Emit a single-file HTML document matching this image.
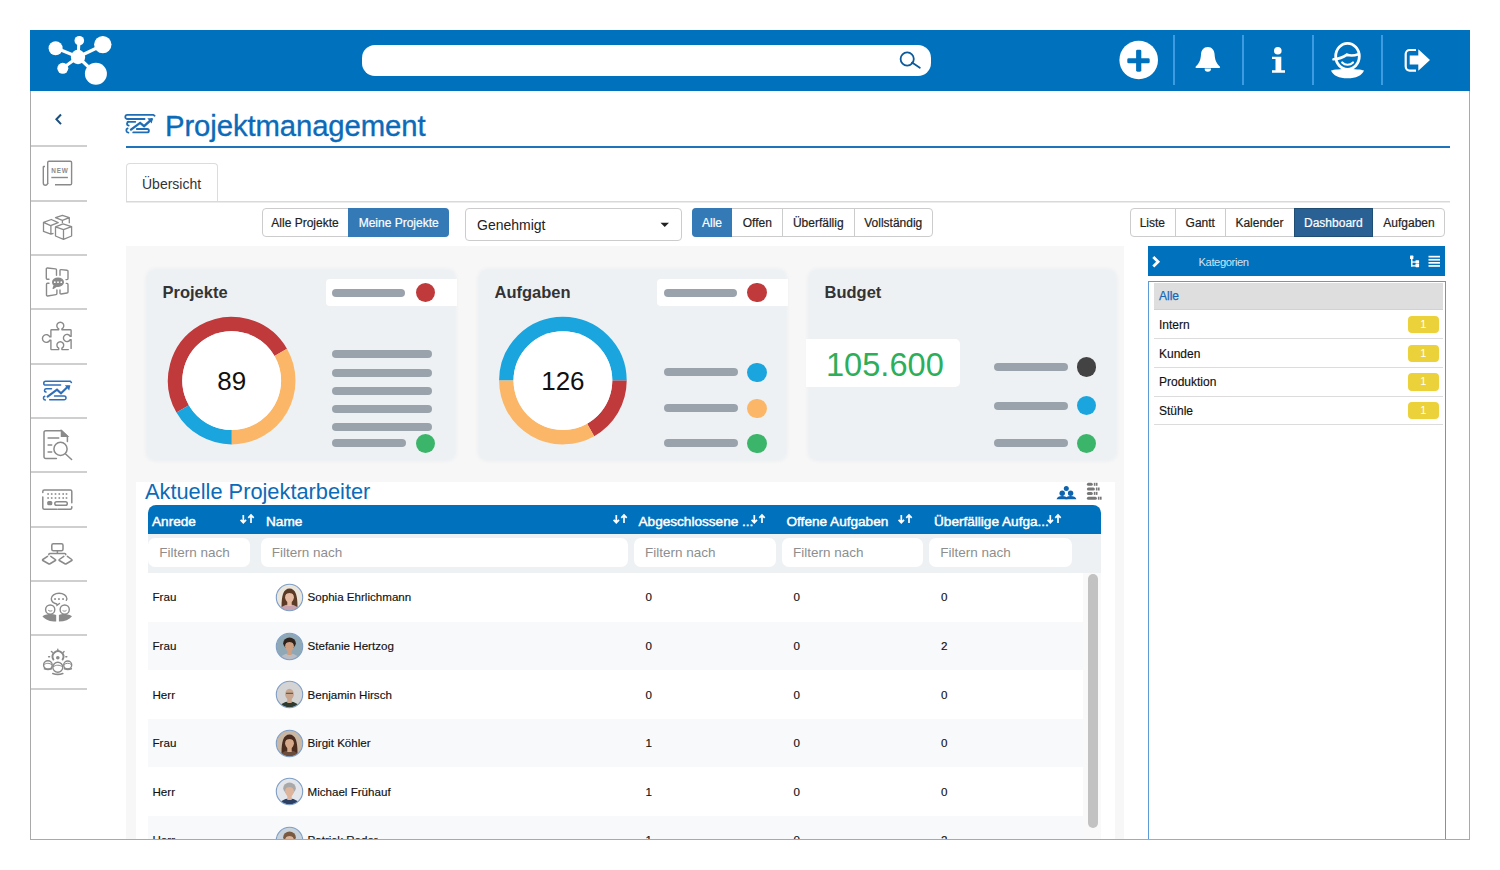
<!DOCTYPE html>
<html>
<head>
<meta charset="utf-8">
<style>
*{box-sizing:border-box;margin:0;padding:0}
html,body{width:1500px;height:870px;overflow:hidden;background:#fff}
body{position:relative;font-family:"Liberation Sans",sans-serif;color:#222}
.a{position:absolute}
.hdr{left:30px;top:30px;width:1440px;height:61px;background:#0071bc}
.sep{top:35px;width:2px;height:50px;background:#3d9be3}
.frameL{left:30px;top:91px;width:1px;height:749px;background:#a9a9a9}
.frameR{left:1469px;top:91px;width:1px;height:749px;background:#a9a9a9}
.frameB{left:30px;top:839px;width:1440px;height:1px;background:#a9a9a9}
.sbl{left:31px;width:56px;height:2px;background:#cfcfcf}
.th{top:512.5px;font-size:13.6px;-webkit-text-stroke:0.45px #fff;line-height:18px;color:#fff;white-space:nowrap}
.fi{top:537.5px;height:29px;background:#fff;border-radius:7px;font-size:13.5px;line-height:29px;color:#8e8e8e;padding-left:11px;white-space:nowrap}
.td{font-size:11.6px;line-height:16px;color:#111;-webkit-text-stroke:0.15px #111;white-space:nowrap}
.btn{font-size:12px;color:#222;-webkit-text-stroke:0.2px currentColor;text-align:center;line-height:30px;height:29px}
</style>
</head>
<body>
<!-- header -->
<div class="a hdr"></div>
<svg class="a" style="left:40px;top:30px" width="80" height="61" viewBox="40 30 80 61">
  <g stroke="#fff" stroke-width="3.1" stroke-linecap="round">
    <line x1="56" y1="48" x2="78" y2="57"/>
    <line x1="79" y1="41" x2="78" y2="57"/>
    <line x1="103" y1="45" x2="78" y2="57"/>
    <line x1="63" y1="68" x2="78" y2="57"/>
    <line x1="96" y1="74" x2="78" y2="57"/>
  </g>
  <g fill="#fff">
    <circle cx="55.6" cy="48.3" r="7"/>
    <circle cx="79.3" cy="40.7" r="4.8"/>
    <circle cx="102.8" cy="44.6" r="8.7"/>
    <circle cx="78" cy="57" r="7.2"/>
    <circle cx="62.8" cy="68.3" r="5.5"/>
    <circle cx="95.9" cy="73.8" r="11"/>
  </g>
</svg>
<div class="a" style="left:362px;top:45px;width:569px;height:31px;background:#fff;border-radius:13px"></div>
<svg class="a" style="left:895px;top:47px" width="30" height="26" viewBox="895 47 30 26">
  <circle cx="907.2" cy="59" r="6.6" fill="none" stroke="#0b5a9c" stroke-width="1.8"/>
  <line x1="912" y1="62.6" x2="919.8" y2="67.8" stroke="#0b5a9c" stroke-width="1.8" stroke-linecap="round"/>
</svg>
<div class="a sep" style="left:1173px"></div>
<div class="a sep" style="left:1242px"></div>
<div class="a sep" style="left:1312px"></div>
<div class="a sep" style="left:1381px"></div>
<svg class="a" style="left:1100px;top:30px" width="370" height="61" viewBox="1100 30 370 61">
  <circle cx="1138.7" cy="60" r="19.3" fill="#fff"/>
  <rect x="1127.3" y="58.3" width="22.4" height="5" rx="1.4" fill="#0071bc"/><rect x="1136.1" y="49.7" width="5.2" height="22" rx="1.4" fill="#0071bc"/>
  <!-- bell -->
  <path d="M1207.8 47c-4.2 0-6.6 3.2-6.8 7.6c-.3 5.2-1.6 8.6-5.2 12c-.6.6-.3 1.5.6 1.5h22.8c.9 0 1.2-.9.6-1.5c-3.6-3.4-4.9-6.8-5.2-12c-.2-4.4-2.6-7.6-6.8-7.6z" fill="#fff"/>
  <path d="M1204.6 68.5a3.2 3.3 0 0 0 6.4 0z" fill="#fff"/>
  <!-- info -->
  <circle cx="1277.8" cy="50.7" r="3.8" fill="#fff"/>
  <path d="M1272 56.7h9.3v13.6h3.7v2.4h-13v-2.4h3.5v-11.2h-3.5z" fill="#fff"/>
  <!-- avatar -->
  <ellipse cx="1347.5" cy="56.3" rx="11.8" ry="13" fill="none" stroke="#fff" stroke-width="2.8"/>
  <path d="M1333.5 59.3C1338.5 59 1343 57.5 1347 54.6C1350.5 56.2 1354 55.8 1358.5 54.2" fill="none" stroke="#fff" stroke-width="2.6" stroke-linecap="round"/>
  <path d="M1342.2 62.5c2.8 3 7.8 3 10.8 0" fill="none" stroke="#fff" stroke-width="2.2" stroke-linecap="round"/>
  <path d="M1331 70.5c6 -2 27 -2 33 0c-2 5 -8 7.8 -16.5 7.8s-14.5 -2.8 -16.5 -7.8z" fill="#fff"/>
  <!-- logout -->
  <path d="M1416 50h-6.3a4 4 0 0 0 -4 4v12.6a4 4 0 0 0 4 4h6.3" fill="none" stroke="#fff" stroke-width="2.2"/>
  <path d="M1409.7 55.5h8.6v-6.3l11.7 10.7l-11.7 10.8v-6.2h-8.6z" fill="#fff"/>
</svg>


<!-- sidebar -->
<svg class="a" style="left:50px;top:110px" width="18" height="18" viewBox="50 110 18 18">
  <path d="M61 114.5l-4.6 4.8l4.6 4.8" fill="none" stroke="#1b4f7e" stroke-width="2"/>
</svg>
<div class="a sbl" style="top:145px"></div>
<div class="a sbl" style="top:199.5px"></div>
<div class="a sbl" style="top:254px"></div>
<div class="a sbl" style="top:308px"></div>
<div class="a sbl" style="top:362.5px"></div>
<div class="a sbl" style="top:417px"></div>
<div class="a sbl" style="top:471px"></div>
<div class="a sbl" style="top:525.5px"></div>
<div class="a sbl" style="top:580px"></div>
<div class="a sbl" style="top:634px"></div>
<div class="a sbl" style="top:688px"></div>
<!-- icon NEW -->
<svg class="a" style="left:38px;top:155px" width="40" height="40" viewBox="0 0 40 40" fill="none" stroke="#8a8a8a" stroke-width="1.4">
  <path d="M9.7 29V7.5a1.3 1.3 0 0 1 1.3-1.3h21.3a1.3 1.3 0 0 1 1.3 1.3v21a1.3 1.3 0 0 1-1.3 1.3H17"/>
  <path d="M7 11.5H5.9a.6.6 0 0 0-.6.6V28a2.2 2.2 0 0 0 4.4 0"/>
  <path d="M13.3 22.5H29.9"/>
  <text x="13.3" y="17.9" font-family="Liberation Sans" font-weight="bold" font-size="6.4" fill="#8a8a8a" stroke="none" textLength="16.6" lengthAdjust="spacing">NEW</text>
</svg>
<!-- icon cubes -->
<svg class="a" style="left:38px;top:208px" width="40" height="40" viewBox="0 0 40 40" fill="none" stroke="#8a8a8a" stroke-width="1.3" stroke-linejoin="round">
  <path d="M5.5 14.3L13.3 11.5L20.2 14.7L12.6 17.7Z M5.5 14.3V23.4L12.9 26.2V17.7 M15.5 25.3L12.9 26.2"/>
  <path d="M17.5 9.7L24.4 7.4L31.3 9.7L24.4 12.4Z M31.3 9.7V15.2 M24.4 12.4V15"/>
  <path d="M17.5 18.9L25 15.9L33.6 18.6L25.5 21.6Z M17.5 18.9V28L25.5 31.3L33.6 28V18.6 M25.5 21.6V31.3"/>
</svg>
<!-- icon chat frame -->
<svg class="a" style="left:38px;top:262px" width="40" height="40" viewBox="0 0 40 40" fill="none" stroke="#8a8a8a" stroke-width="1.4" stroke-linecap="round" stroke-linejoin="round">
  <path d="M11 17.2H9.3a1 1 0 0 1-1-1V7a1 1 0 0 1 1.1-1L17.6 6.9a1 1 0 0 1 .9 1V13.3"/>
  <path d="M22 13.3V8.6a1 1 0 0 1 1.1-1L29 8.3a1 1 0 0 1 1 1V16.6a1 1 0 0 1-1 1H28"/>
  <path d="M11 21.3H9.5a1 1 0 0 0-1 1V33a1 1 0 0 0 1.1 1L18 32.6a1 1 0 0 0 .9-1V28"/>
  <path d="M22 28V31a1 1 0 0 0 1.1 1L29 31a1 1 0 0 0 1-1V22.4a1 1 0 0 0-1-1H28.3"/>
  <path d="M20 16.2c-3 0-5.3 1.8-5.3 4c0 1.2.6 2.2 1.6 3L15.2 26.4L18.5 24.1c.5.1 1 .1 1.5.1c3 0 5.3-1.8 5.3-4s-2.3-4-5.3-4z" fill="#8a8a8a"/>
  <g fill="#fff" stroke="none"><circle cx="16.8" cy="20.2" r=".9"/><circle cx="20" cy="20.2" r=".9"/><circle cx="23.3" cy="20.2" r=".9"/></g>
</svg>
<!-- icon puzzle -->
<svg class="a" style="left:38px;top:316px" width="40" height="40" viewBox="0 0 40 40" fill="none" stroke="#8a8a8a" stroke-width="1.4" stroke-linejoin="round" stroke-linecap="round">
  <path d="M30.3 33.6H23.9V32.2A3.4 3.4 0 1 0 20.7 32.2V33.6H13.6a.7.7 0 0 1-.7-.7V24.1H11.8A3.85 3.85 0 1 1 11.8 20.9H12.9V14.5a.7.7 0 0 1 .7-.7H20.7V12.8A3.49 3.49 0 1 1 23.9 12.8V13.8H32.4a.7.7 0 0 1 .7.7V20.4H32.2A3.58 3.58 0 1 0 32.2 23.6H33.1V32.4"/>
</svg>
<!-- icon chart -->
<svg class="a" style="left:38px;top:370px" width="40" height="40" viewBox="0 0 40 40" fill="none" stroke="#2f6fb8" stroke-width="1.5" stroke-linecap="round">
  <path d="M33.4 12.5L32.3 11.2H7.7a1.9 1.9 0 0 0 0 3.9H22.6"/>
  <path d="M13.5 18.7H8.5a1.7 1.7 0 0 0-.5 3.4"/>
  <path d="M6.8 26.2a2 2 0 0 0 .6 3.9 M11.7 29.7H26.2a1.7 1.7 0 0 0 0-3.6H16.5"/>
  <path d="M9.6 26.6L19 19.6L23 23.2L30 16.6" stroke-width="2.1"/>
  <path d="M26.8 15.3L32.4 15.2L31.2 20.4Z" fill="#2f6fb8" stroke="none"/>
</svg>
<!-- icon doc search -->
<svg class="a" style="left:38px;top:425px" width="40" height="40" viewBox="0 0 40 40" fill="none" stroke="#8a8a8a" stroke-width="1.5" stroke-linecap="round">
  <path d="M18.4 33.6H7.8a1.8 1.8 0 0 1-1.8-1.8V7.5a1.8 1.8 0 0 1 1.8-1.8H23.5L29.4 11.3V16.5"/>
  <path d="M23.5 5.8V11.3H29.4Z" fill="#8a8a8a"/>
  <path d="M10.1 13.1H20.7M10.1 20H13.7M10.1 27.1H13.7"/>
  <circle cx="22.5" cy="23.9" r="6.6"/>
  <path d="M27.6 29L33.6 34.5"/>
</svg>
<!-- icon keyboard -->
<svg class="a" style="left:38px;top:480px" width="40" height="40" viewBox="0 0 40 40" fill="none" stroke="#8a8a8a" stroke-width="1.5" stroke-linecap="round">
  <path d="M4.8 12.6V11.4a1.5 1.5 0 0 1 1.5-1.5H32.3a1.5 1.5 0 0 1 1.5 1.5V22.7 M33.8 26.8V27.7a1.5 1.5 0 0 1-1.5 1.5H20 M18.7 29.2H6.3a1.5 1.5 0 0 1-1.5-1.5V16.9"/>
  <g fill="#8a8a8a" stroke="none">
   <rect x="9.3" y="13.2" width="1.6" height="1.6"/><rect x="12.9" y="13.2" width="1.6" height="1.6"/><rect x="16.7" y="13.2" width="1.6" height="1.6"/><rect x="20.5" y="13.2" width="1.6" height="1.6"/><rect x="24.4" y="13.2" width="1.6" height="1.6"/><rect x="27.7" y="13.2" width="1.6" height="1.6"/>
   <rect x="9.3" y="17.2" width="1.6" height="1.6"/><rect x="12.9" y="17.2" width="1.6" height="1.6"/><rect x="16.7" y="17.2" width="1.6" height="1.6"/><rect x="20.5" y="17.2" width="1.6" height="1.6"/><rect x="24.4" y="17.2" width="1.6" height="1.6"/><rect x="27.7" y="17.2" width="1.6" height="1.6"/>
   <rect x="9.2" y="21.1" width="5.1" height="4.2" rx="1.5"/>
  </g>
  <rect x="16.8" y="21.7" width="12.5" height="3.6" rx="1.8"/>
</svg>
<!-- icon flowchart -->
<svg class="a" style="left:38px;top:534px" width="40" height="40" viewBox="0 0 40 40" fill="none" stroke="#8a8a8a" stroke-width="1.5" stroke-linecap="round" stroke-linejoin="round">
  <rect x="13.8" y="9.7" width="11.2" height="7" rx="1.5"/>
  <path d="M19.4 16.8V19.5 M10.8 20.8V20.4a1 1 0 0 1 1-1H26.8a1 1 0 0 1 1 1V20.8"/>
  <path d="M9.5 22.4L4.8 25.5a.6.6 0 0 0 0 1L11 30a.6.6 0 0 0 .6 0L17.4 26.5a.6.6 0 0 0 0-1L12.8 22.4"/>
  <path d="M25.8 22.4L21.3 25.5a.6.6 0 0 0 0 1L27.3 30a.6.6 0 0 0 .6 0L33.8 26.5a.6.6 0 0 0 0-1L29.4 22.4"/>
</svg>
<!-- icon people chat -->
<svg class="a" style="left:38px;top:588px" width="40" height="40" viewBox="0 0 40 40" fill="none" stroke="#8a8a8a" stroke-width="1.4" stroke-linecap="round">
  <path d="M28.3 12.3c.5-.6.6-1.2.6-1.6c0-3-3.5-5.5-7.8-5.5s-7.8 2.5-7.8 5.5c0 2.4 2.2 4.4 5.4 5.3L19 17.4L21.5 15.5"/>
  <g fill="#8a8a8a" stroke="none"><rect x="16.2" y="10.2" width="1.7" height="1.7"/><rect x="20.1" y="10.2" width="1.7" height="1.7"/><rect x="24.2" y="10.2" width="1.7" height="1.7"/></g>
  <circle cx="12.2" cy="21.6" r="4.6"/>
  <circle cx="26.7" cy="21.6" r="4.6"/>
  <path d="M4.4 28.2c3-1.6 6-2.1 8-2.1c1.6 0 3.6.3 5.8 1V33.6c-6 0-11-1.8-13.8-5.4z" fill="#8a8a8a" stroke="none"/>
  <path d="M34 28.2c-3-1.6-6-2.1-8-2.1c-1.6 0-3.6.3-5.1 1V33.6c6 0 10.3-1.8 13.1-5.4z" fill="#8a8a8a" stroke="none"/>
  <path d="M10.5 22.5c.8.8 2.3.8 3.4.3 M25 22.8c.8.6 2.3.6 3.2-.2" stroke-width="1"/>
</svg>
<!-- icon team -->
<svg class="a" style="left:38px;top:642px" width="40" height="40" viewBox="0 0 40 40" fill="none" stroke="#8a8a8a" stroke-width="1.4" stroke-linecap="round">
  <path d="M15.4 17.5a5.4 5.4 0 1 1 9.2 0" stroke-width="1.9"/>
  <circle cx="19.8" cy="15.8" r="1.8" fill="#8a8a8a" stroke="none"/>
  <path d="M19.8 7.2V8.4 M13.4 9.4L14.4 10.3 M26.1 9.6L25.2 10.4 M10.6 14.7H11.6 M27.8 14.7H28.8"/>
  <circle cx="9.9" cy="23" r="4.3"/>
  <circle cx="29.7" cy="23" r="4"/>
  <circle cx="19.8" cy="25.2" r="5"/>
  <path d="M6.5 26.7c2 .8 5 .8 7 0 M26.5 26.7c2 .8 4.8.8 6.8 0 M14.8 31.5c2.8 1 7.2 1 10 0" stroke-width="1.6"/>
  <path d="M6 22.6c2-1.8 5.6-1.8 7.6 0 M26.4 22.3c1.9-1.5 4.8-1.5 6.6 0 M15.2 24.8c2.5-2.2 6.7-2.2 9.2 0" stroke-width="1"/>
</svg>


<!-- title -->
<svg class="a" style="left:120px;top:108px" width="50" height="34" viewBox="0 0 50 34" fill="none" stroke="#1f6db5" stroke-width="1.8" stroke-linecap="round">
  <path d="M34.6 7.8L33.2 6.8H7.4a2.1 2.1 0 0 0 0 4.2H24.6"/>
  <path d="M15.3 13.8H9.2a1.9 1.9 0 0 0-.5 3.8"/>
  <path d="M7.6 20.4a2.2 2.2 0 0 0 .8 4.2 M13.2 24.4H27.2a1.7 1.7 0 0 0 0-3.4H16.8"/>
  <path d="M11 21.6L20.1 14.9L24.1 18.2L31.6 11.3" stroke-width="2.4"/>
  <path d="M27.3 10.2L32.9 10.3L31.7 15.6Z" fill="#1f6db5" stroke="none"/>
</svg>
<div class="a" style="left:165px;top:108px;font-size:29.3px;color:#0b6bb8;-webkit-text-stroke:0.35px #0b6bb8;line-height:36px;white-space:nowrap;letter-spacing:-0.1px">Projektmanagement</div>
<div class="a" style="left:126px;top:145.5px;width:1324px;height:2px;background:#1e73ba"></div>

<!-- tab -->
<div class="a" style="left:126px;top:163px;width:92px;height:39px;border:1px solid #dcdcdc;border-bottom:none;border-radius:4px 4px 0 0;background:#fff"></div>
<div class="a" style="left:142px;top:175px;font-size:14px;line-height:18px;color:#333">Übersicht</div>
<div class="a" style="left:126px;top:201px;width:1324px;height:2px;background:linear-gradient(#d9d9d9 50%,#ececec 50%)"></div>

<!-- button group 1 -->
<div class="a" style="left:261.5px;top:208px;width:187.5px;height:29px;border:1px solid #ccc;border-radius:4px;background:#fff"></div>
<div class="a" style="left:348.4px;top:208px;width:100.6px;height:29px;border-radius:0 4px 4px 0;background:#337ab7"></div>
<div class="a btn" style="left:262px;top:208px;width:86px">Alle Projekte</div>
<div class="a btn" style="left:348.4px;top:208px;width:100.6px;color:#fff">Meine Projekte</div>

<!-- dropdown -->
<div class="a" style="left:464.5px;top:208px;width:217px;height:33px;border:1px solid #ccc;border-radius:4px;background:#fff"></div>
<div class="a" style="left:477px;top:216px;font-size:14px;line-height:18px;color:#222">Genehmigt</div>
<svg class="a" style="left:659px;top:221px" width="12" height="8" viewBox="0 0 12 8"><path d="M1.5 1.8h8.5l-4.25 4.2z" fill="#222"/></svg>

<!-- button group 2 -->
<div class="a" style="left:692px;top:208px;width:240.5px;height:29px;border:1px solid #ccc;border-radius:4px;background:#fff"></div>
<div class="a" style="left:692px;top:208px;width:40.1px;height:29px;border-radius:4px 0 0 4px;background:#337ab7"></div>
<div class="a" style="left:782.1px;top:208px;width:1px;height:29px;background:#ccc"></div>
<div class="a" style="left:853.5px;top:208px;width:1px;height:29px;background:#ccc"></div>
<div class="a btn" style="left:692px;top:208px;width:40.1px;color:#fff">Alle</div>
<div class="a btn" style="left:732.1px;top:208px;width:50.5px">Offen</div>
<div class="a btn" style="left:782.6px;top:208px;width:71.4px">Überfällig</div>
<div class="a btn" style="left:854px;top:208px;width:78.5px">Vollständig</div>

<!-- button group 3 -->
<div class="a" style="left:1129.5px;top:208px;width:315.2px;height:29px;border:1px solid #ccc;border-radius:4px;background:#fff"></div>
<div class="a" style="left:1174.7px;top:208px;width:1px;height:29px;background:#ccc"></div>
<div class="a" style="left:1224.9px;top:208px;width:1px;height:29px;background:#ccc"></div>
<div class="a" style="left:1293.5px;top:208px;width:79.8px;height:29px;background:#2a6195;border:1px solid #204d74"></div>
<div class="a btn" style="left:1129.5px;top:208px;width:45.7px">Liste</div>
<div class="a btn" style="left:1175.2px;top:208px;width:50.2px">Gantt</div>
<div class="a btn" style="left:1225.4px;top:208px;width:68.1px">Kalender</div>
<div class="a btn" style="left:1293.5px;top:208px;width:79.8px;color:#fff">Dashboard</div>
<div class="a btn" style="left:1373.3px;top:208px;width:71.4px">Aufgaben</div>

<!-- gray panel -->
<div class="a" style="left:126px;top:246px;width:997.5px;height:593px;background:#f8f7f7"></div>


<!-- cards -->
<div class="a" style="left:145px;top:268px;width:311.5px;height:194px;background:#eef1f4;border-radius:10px;filter:blur(1.2px)"></div>
<div class="a" style="left:476.5px;top:268px;width:311.7px;height:194px;background:#eef1f4;border-radius:10px;filter:blur(1.2px)"></div>
<div class="a" style="left:806.5px;top:268px;width:311.7px;height:194px;background:#eef1f4;border-radius:10px;filter:blur(1.2px)"></div>
<div class="a" style="left:325.5px;top:279px;width:131px;height:27px;background:#fff;border-radius:4px 0 0 4px"></div>
<div class="a" style="left:657.2px;top:279px;width:131px;height:27px;background:#fff;border-radius:4px 0 0 4px"></div>
<div class="a" style="left:806px;top:339.3px;width:153.6px;height:48.2px;background:#fff;border-radius:0 5px 5px 0"></div>
<div class="a" style="left:162.5px;top:282px;font-size:16.5px;font-weight:bold;color:#333;line-height:20px">Projekte</div>
<div class="a" style="left:494.5px;top:282px;font-size:16.5px;font-weight:bold;color:#333;line-height:20px">Aufgaben</div>
<div class="a" style="left:824.5px;top:282px;font-size:16.5px;font-weight:bold;color:#333;line-height:20px">Budget</div>
<svg class="a" style="left:126px;top:246px" width="997" height="236" viewBox="126 246 997 236">
<path d="M182.68 408.90A56.6 56.6 0 0 1 280.72 352.30" stroke="#c0393b" stroke-width="14.4" fill="none"/>
<path d="M280.72 352.30A56.6 56.6 0 0 1 231.70 437.20" stroke="#fbb767" stroke-width="14.4" fill="none"/>
<path d="M231.70 437.20A56.6 56.6 0 0 1 182.68 408.90" stroke="#1aa5df" stroke-width="14.4" fill="none"/>
<circle cx="231.7" cy="380.6" r="49.4" fill="#fff"/>
<path d="M506.30 380.60A56.6 56.6 0 0 1 619.50 380.60" stroke="#1aa5df" stroke-width="14.4" fill="none"/>
<path d="M619.50 380.60A56.6 56.6 0 0 1 590.69 429.91" stroke="#c0393b" stroke-width="14.4" fill="none"/>
<path d="M590.69 429.91A56.6 56.6 0 0 1 506.30 380.60" stroke="#fbb767" stroke-width="14.4" fill="none"/>
<circle cx="562.9" cy="380.6" r="49.4" fill="#fff"/>
</svg>
<div class="a" style="left:181.7px;top:366px;width:100px;text-align:center;font-size:26px;line-height:30px;color:#111">89</div>
<div class="a" style="left:512.9px;top:366px;width:100px;text-align:center;font-size:26px;line-height:30px;color:#111">126</div>
<div class="a" style="left:826px;top:345px;font-size:32.6px;line-height:40px;color:#2dae5b">105.600</div>
<div class="a" style="left:332.4px;top:289.2px;width:73.0px;height:8px;border-radius:4.0px;background:#9aa3ac"></div>
<div class="a" style="left:415.6px;top:282.7px;width:19.4px;height:19.4px;border-radius:50%;background:#c0393b"></div>
<div class="a" style="left:332.4px;top:349.9px;width:99.20000000000005px;height:8px;border-radius:4.0px;background:#9aa3ac"></div>
<div class="a" style="left:332.4px;top:368.9px;width:99.20000000000005px;height:8px;border-radius:4.0px;background:#9aa3ac"></div>
<div class="a" style="left:332.4px;top:387.1px;width:99.20000000000005px;height:8px;border-radius:4.0px;background:#9aa3ac"></div>
<div class="a" style="left:332.4px;top:404.8px;width:99.20000000000005px;height:8px;border-radius:4.0px;background:#9aa3ac"></div>
<div class="a" style="left:332.4px;top:422.7px;width:99.20000000000005px;height:8px;border-radius:4.0px;background:#9aa3ac"></div>
<div class="a" style="left:332.4px;top:439.3px;width:73.5px;height:8px;border-radius:4.0px;background:#9aa3ac"></div>
<div class="a" style="left:415.6px;top:433.6px;width:19.4px;height:19.4px;border-radius:50%;background:#3bb56a"></div>
<div class="a" style="left:664px;top:289.2px;width:73.20000000000005px;height:8px;border-radius:4.0px;background:#9aa3ac"></div>
<div class="a" style="left:747.3px;top:282.7px;width:19.4px;height:19.4px;border-radius:50%;background:#c0393b"></div>
<div class="a" style="left:664px;top:368.4px;width:73.70000000000005px;height:8px;border-radius:4.0px;background:#9aa3ac"></div>
<div class="a" style="left:747.3px;top:362.7px;width:19.4px;height:19.4px;border-radius:50%;background:#1aa5df"></div>
<div class="a" style="left:664px;top:404.2px;width:73.70000000000005px;height:8px;border-radius:4.0px;background:#9aa3ac"></div>
<div class="a" style="left:747.3px;top:398.5px;width:19.4px;height:19.4px;border-radius:50%;background:#fbb767"></div>
<div class="a" style="left:664px;top:439.3px;width:73.70000000000005px;height:8px;border-radius:4.0px;background:#9aa3ac"></div>
<div class="a" style="left:747.3px;top:433.6px;width:19.4px;height:19.4px;border-radius:50%;background:#3bb56a"></div>
<div class="a" style="left:994px;top:362.9px;width:73.70000000000005px;height:8px;border-radius:4.0px;background:#9aa3ac"></div>
<div class="a" style="left:1077.1px;top:357.2px;width:19.4px;height:19.4px;border-radius:50%;background:#434343"></div>
<div class="a" style="left:994px;top:401.5px;width:73.70000000000005px;height:8px;border-radius:4.0px;background:#9aa3ac"></div>
<div class="a" style="left:1077.1px;top:395.8px;width:19.4px;height:19.4px;border-radius:50%;background:#1aa5df"></div>
<div class="a" style="left:994px;top:439.3px;width:73.70000000000005px;height:8px;border-radius:4.0px;background:#9aa3ac"></div>
<div class="a" style="left:1077.1px;top:433.6px;width:19.4px;height:19.4px;border-radius:50%;background:#3bb56a"></div>

<!-- table container -->
<div class="a" style="left:135.5px;top:482px;width:979.5px;height:357px;background:#fff"></div>
<div class="a" style="left:145px;top:479px;font-size:21.8px;line-height:26px;color:#0b6bb8;white-space:nowrap">Aktuelle Projektarbeiter</div>
<svg class="a" style="left:1054px;top:481px" width="52" height="21" viewBox="1054 481 52 21">
  <g fill="#0d63ae">
    <circle cx="1066.3" cy="488.6" r="2.5"/>
    <circle cx="1062.2" cy="493.2" r="2.7"/>
    <circle cx="1070.6" cy="493.2" r="2.7"/>
    <path d="M1056.6 499.2c.6-2.3 2.6-3.3 5.6-3.3s5 1 5.4 3.3z"/>
    <path d="M1065.2 499.2c.6-2.3 2.4-3.3 5.4-3.3s5.2 1 5.8 3.3z"/>
  </g>
  <g fill="#777">
    <rect x="1086.9" y="482.8" width="5.9" height="3" rx="1.5"/><rect x="1093.8" y="482.8" width="1.6" height="3"/><rect x="1095.9" y="482.8" width="1.6" height="3"/>
    <rect x="1086.9" y="487.5" width="8" height="3" rx="1.5"/><rect x="1095.9" y="487.5" width="1.6" height="3"/><rect x="1098" y="487.5" width="1.6" height="3"/>
    <rect x="1086.9" y="491.9" width="5.9" height="3" rx="1.5"/><rect x="1093.8" y="491.9" width="1.6" height="3"/><rect x="1095.9" y="491.9" width="1.6" height="3"/>
    <rect x="1086.9" y="496.7" width="10" height="3" rx="1.5"/><rect x="1097.9" y="496.7" width="1.6" height="3"/><rect x="1100" y="496.7" width="1.6" height="3"/>
  </g>
</svg>
<!-- table header -->
<div class="a" style="left:147.5px;top:504.5px;width:953.5px;height:29.5px;background:#0071bc;border-radius:8px 8px 0 0"></div>
<div class="a th" style="left:152px">Anrede</div>
<div class="a th" style="left:266px">Name</div>
<div class="a th" style="left:638.5px">Abgeschlossene ...</div>
<div class="a th" style="left:786.5px">Offene Aufgaben</div>
<div class="a th" style="left:934px">Überfällige Aufga...</div>
<svg class="a" style="left:230px;top:510px" width="850" height="20" viewBox="230 510 850 20" fill="none" stroke="#fff" stroke-width="1.7">
  <g id="srt"><path d="M243.3 515v7.6M240.6 519.8l2.7 2.9l2.7-2.9 M251 523v-7.6M248.3 517.9l2.7-2.9l2.7 2.9"/></g>
  <use href="#srt" x="373"/>
  <use href="#srt" x="511"/>
  <use href="#srt" x="658"/>
  <use href="#srt" x="807"/>
</svg>
<!-- filter row -->
<div class="a" style="left:147.5px;top:534px;width:953.5px;height:39px;background:#eef1f4"></div>
<div class="a fi" style="left:148.3px;width:102.2px">Filtern nach</div>
<div class="a fi" style="left:260.8px;width:367px">Filtern nach</div>
<div class="a fi" style="left:634px;width:142px">Filtern nach</div>
<div class="a fi" style="left:782px;width:141.4px">Filtern nach</div>
<div class="a fi" style="left:929.3px;width:142.7px">Filtern nach</div>
<!-- rows -->
<div class="a" style="left:147.5px;top:621.5px;width:935px;height:48.5px;background:#f7f9fb"></div>
<div class="a" style="left:147.5px;top:718.7px;width:935px;height:48.5px;background:#f7f9fb"></div>
<div class="a" style="left:147.5px;top:816.2px;width:935px;height:23px;background:#f7f9fb"></div>
<div class="a" style="left:1082.5px;top:573px;width:18.5px;height:266px;background:#f9f9f9"></div>
<div class="a" style="left:1087.8px;top:574px;width:9.8px;height:253.5px;background:#c2c2c2;border-radius:5px"></div>
<div class="a td" style="left:152.5px;top:589.4px">Frau</div>
<svg class="a" style="left:274.6px;top:582.9px" width="29" height="29" viewBox="0 0 29 29"><defs><clipPath id="c0"><circle cx="14.5" cy="14.5" r="13"/></clipPath></defs><g clip-path="url(#c0)"><rect width="29" height="29" fill="#ebe6dc"/><path d="M6.5 24c0-6 .5-10 1.5-13c1.2-3.8 3.6-5.6 6.5-5.6s5.3 1.8 6.5 5.6c1 3 1.5 7 1.5 13z" fill="#5b3a26"/><ellipse cx="14.5" cy="29" rx="10.5" ry="7.5" fill="#c9a3ad"/><rect x="12.3" y="18" width="4.4" height="5" fill="#e6bca4"/><ellipse cx="14.5" cy="14.2" rx="4.4" ry="5.4" fill="#e6bca4"/><path d="M9.8 12.5c.3-3.5 2-5.5 4.7-5.5s4.4 2 4.7 5.5c-1.5-2-3-2.6-4.7-2.6s-3.2.6-4.7 2.6z" fill="#5b3a26"/></g><circle cx="14.5" cy="14.5" r="13.2" fill="none" stroke="#7e9cc4" stroke-width="1.1"/></svg>
<div class="a td" style="left:307.5px;top:589.4px">Sophia Ehrlichmann</div>
<div class="a td" style="left:645.5px;top:589.4px">0</div>
<div class="a td" style="left:793.5px;top:589.4px">0</div>
<div class="a td" style="left:941px;top:589.4px">0</div>
<div class="a td" style="left:152.5px;top:638.0px">Frau</div>
<svg class="a" style="left:274.6px;top:631.5px" width="29" height="29" viewBox="0 0 29 29"><defs><clipPath id="c1"><circle cx="14.5" cy="14.5" r="13"/></clipPath></defs><g clip-path="url(#c1)"><rect width="29" height="29" fill="#8ea8b6"/><ellipse cx="14.5" cy="11.2" rx="6.3" ry="5.6" fill="#2f231c"/><ellipse cx="14.5" cy="29" rx="10.5" ry="7.5" fill="#b9bcc2"/><rect x="12.3" y="18" width="4.4" height="5" fill="#cf9f82"/><ellipse cx="14.5" cy="14.2" rx="4.4" ry="5.4" fill="#cf9f82"/><path d="M9.8 12.5c.3-3.5 2-5.5 4.7-5.5s4.4 2 4.7 5.5c-1.5-2-3-2.6-4.7-2.6s-3.2.6-4.7 2.6z" fill="#2f231c"/></g><circle cx="14.5" cy="14.5" r="13.2" fill="none" stroke="#7e9cc4" stroke-width="1.1"/></svg>
<div class="a td" style="left:307.5px;top:638.0px">Stefanie Hertzog</div>
<div class="a td" style="left:645.5px;top:638.0px">0</div>
<div class="a td" style="left:793.5px;top:638.0px">0</div>
<div class="a td" style="left:941px;top:638.0px">2</div>
<div class="a td" style="left:152.5px;top:686.6px">Herr</div>
<svg class="a" style="left:274.6px;top:680.1px" width="29" height="29" viewBox="0 0 29 29"><defs><clipPath id="c2"><circle cx="14.5" cy="14.5" r="13"/></clipPath></defs><g clip-path="url(#c2)"><rect width="29" height="29" fill="#d4d4d4"/><ellipse cx="14.5" cy="29" rx="10.5" ry="7.5" fill="#2e3a2e"/><rect x="12.3" y="18" width="4.4" height="5" fill="#c9a68e"/><ellipse cx="14.5" cy="14.2" rx="4.4" ry="5.4" fill="#c9a68e"/><path d="M11 13.3h7" stroke="#333" stroke-width=".8"/></g><circle cx="14.5" cy="14.5" r="13.2" fill="none" stroke="#7e9cc4" stroke-width="1.1"/></svg>
<div class="a td" style="left:307.5px;top:686.6px">Benjamin Hirsch</div>
<div class="a td" style="left:645.5px;top:686.6px">0</div>
<div class="a td" style="left:793.5px;top:686.6px">0</div>
<div class="a td" style="left:941px;top:686.6px">0</div>
<div class="a td" style="left:152.5px;top:735.2px">Frau</div>
<svg class="a" style="left:274.6px;top:728.7px" width="29" height="29" viewBox="0 0 29 29"><defs><clipPath id="c3"><circle cx="14.5" cy="14.5" r="13"/></clipPath></defs><g clip-path="url(#c3)"><rect width="29" height="29" fill="#c9b7a3"/><path d="M6.5 24c0-6 .5-10 1.5-13c1.2-3.8 3.6-5.6 6.5-5.6s5.3 1.8 6.5 5.6c1 3 1.5 7 1.5 13z" fill="#4a2c1e"/><ellipse cx="14.5" cy="29" rx="10.5" ry="7.5" fill="#6b4b3a"/><rect x="12.3" y="18" width="4.4" height="5" fill="#d6a98b"/><ellipse cx="14.5" cy="14.2" rx="4.4" ry="5.4" fill="#d6a98b"/><path d="M9.8 12.5c.3-3.5 2-5.5 4.7-5.5s4.4 2 4.7 5.5c-1.5-2-3-2.6-4.7-2.6s-3.2.6-4.7 2.6z" fill="#4a2c1e"/></g><circle cx="14.5" cy="14.5" r="13.2" fill="none" stroke="#7e9cc4" stroke-width="1.1"/></svg>
<div class="a td" style="left:307.5px;top:735.2px">Birgit Köhler</div>
<div class="a td" style="left:645.5px;top:735.2px">1</div>
<div class="a td" style="left:793.5px;top:735.2px">0</div>
<div class="a td" style="left:941px;top:735.2px">0</div>
<div class="a td" style="left:152.5px;top:783.8px">Herr</div>
<svg class="a" style="left:274.6px;top:777.3px" width="29" height="29" viewBox="0 0 29 29"><defs><clipPath id="c4"><circle cx="14.5" cy="14.5" r="13"/></clipPath></defs><g clip-path="url(#c4)"><rect width="29" height="29" fill="#e3e6ea"/><ellipse cx="14.5" cy="11.2" rx="6.3" ry="5.6" fill="#a9a9a9"/><ellipse cx="14.5" cy="29" rx="10.5" ry="7.5" fill="#2d3e63"/><rect x="12.3" y="18" width="4.4" height="5" fill="#dcb59c"/><ellipse cx="14.5" cy="14.2" rx="4.4" ry="5.4" fill="#dcb59c"/><path d="M9.8 12.5c.3-3.5 2-5.5 4.7-5.5s4.4 2 4.7 5.5c-1.5-2-3-2.6-4.7-2.6s-3.2.6-4.7 2.6z" fill="#a9a9a9"/></g><circle cx="14.5" cy="14.5" r="13.2" fill="none" stroke="#7e9cc4" stroke-width="1.1"/></svg>
<div class="a td" style="left:307.5px;top:783.8px">Michael Frühauf</div>
<div class="a td" style="left:645.5px;top:783.8px">1</div>
<div class="a td" style="left:793.5px;top:783.8px">0</div>
<div class="a td" style="left:941px;top:783.8px">0</div>
<div class="a td" style="left:152.5px;top:832.4px">Herr</div>
<svg class="a" style="left:274.6px;top:825.9px" width="29" height="29" viewBox="0 0 29 29"><defs><clipPath id="c5"><circle cx="14.5" cy="14.5" r="13"/></clipPath></defs><g clip-path="url(#c5)"><rect width="29" height="29" fill="#c9d3dc"/><ellipse cx="14.5" cy="11.2" rx="6.3" ry="5.6" fill="#7a5a40"/><ellipse cx="14.5" cy="29" rx="10.5" ry="7.5" fill="#2d3e63"/><rect x="12.3" y="18" width="4.4" height="5" fill="#dcb59c"/><ellipse cx="14.5" cy="14.2" rx="4.4" ry="5.4" fill="#dcb59c"/><path d="M9.8 12.5c.3-3.5 2-5.5 4.7-5.5s4.4 2 4.7 5.5c-1.5-2-3-2.6-4.7-2.6s-3.2.6-4.7 2.6z" fill="#7a5a40"/></g><circle cx="14.5" cy="14.5" r="13.2" fill="none" stroke="#7e9cc4" stroke-width="1.1"/></svg>
<div class="a td" style="left:307.5px;top:832.4px">Patrick Reder</div>
<div class="a td" style="left:645.5px;top:832.4px">1</div>
<div class="a td" style="left:793.5px;top:832.4px">0</div>
<div class="a td" style="left:941px;top:832.4px">2</div>
<!-- gray strip right of container -->
<!-- right panel -->
<div class="a" style="left:1148px;top:246.4px;width:297.3px;height:29.2px;background:#0071bc"></div>
<svg class="a" style="left:1148px;top:246px" width="298" height="30" viewBox="1148 246 298 30">
  <path d="M1153.3 257l4.8 4.8l-4.8 4.8" fill="none" stroke="#fff" stroke-width="2.8"/>
  <g fill="#fff">
    <rect x="1410" y="255.6" width="3.4" height="3.4" rx=".6"/>
    <rect x="1411" y="258" width="1.5" height="8.5"/>
    <rect x="1411" y="261.4" width="5" height="1.3"/>
    <rect x="1411" y="265.2" width="5" height="1.3"/>
    <rect x="1415.5" y="260.2" width="3.6" height="3.4" rx=".6"/>
    <rect x="1415.5" y="263.8" width="3.6" height="3.4" rx=".6"/>
    <rect x="1428.5" y="255.8" width="11.5" height="1.7"/>
    <rect x="1428.5" y="258.9" width="11.5" height="1.7"/>
    <rect x="1428.5" y="262" width="11.5" height="1.7"/>
    <rect x="1428.5" y="265.1" width="11.5" height="1.7"/>
  </g>
</svg>
<div class="a" style="left:1198.5px;top:255px;font-size:11.2px;line-height:14px;color:#cfe3f5;letter-spacing:-0.4px">Kategorien</div>
<div class="a" style="left:1148px;top:281px;width:297.5px;height:570px;border:1.5px solid #5c9bd6;border-bottom:none;background:#fff"></div>
<div class="a" style="left:1154.3px;top:282.5px;width:289px;height:27.6px;background:#dedede;border-bottom:1px solid #d2d2d2"></div>
<div class="a" style="left:1159px;top:289px;font-size:12px;line-height:14px;color:#1767b9;-webkit-text-stroke:0.25px #1767b9">Alle</div>
<div class="a" style="left:1159px;top:318.0px;font-size:12px;line-height:14px;color:#111;-webkit-text-stroke:0.15px #111">Intern</div>
<div class="a" style="left:1407.8px;top:316.2px;width:31.1px;height:17.2px;background:#ecd23a;border-radius:4px;color:#fff;font-size:11px;line-height:17px;text-align:center">1</div>
<div class="a" style="left:1154.3px;top:338px;width:289px;height:1px;background:#dcdcdc"></div>
<div class="a" style="left:1159px;top:346.6px;font-size:12px;line-height:14px;color:#111;-webkit-text-stroke:0.15px #111">Kunden</div>
<div class="a" style="left:1407.8px;top:344.8px;width:31.1px;height:17.2px;background:#ecd23a;border-radius:4px;color:#fff;font-size:11px;line-height:17px;text-align:center">1</div>
<div class="a" style="left:1154.3px;top:367px;width:289px;height:1px;background:#dcdcdc"></div>
<div class="a" style="left:1159px;top:375.2px;font-size:12px;line-height:14px;color:#111;-webkit-text-stroke:0.15px #111">Produktion</div>
<div class="a" style="left:1407.8px;top:373.4px;width:31.1px;height:17.2px;background:#ecd23a;border-radius:4px;color:#fff;font-size:11px;line-height:17px;text-align:center">1</div>
<div class="a" style="left:1154.3px;top:396px;width:289px;height:1px;background:#dcdcdc"></div>
<div class="a" style="left:1159px;top:403.8px;font-size:12px;line-height:14px;color:#111;-webkit-text-stroke:0.15px #111">Stühle</div>
<div class="a" style="left:1407.8px;top:402.0px;width:31.1px;height:17.2px;background:#ecd23a;border-radius:4px;color:#fff;font-size:11px;line-height:17px;text-align:center">1</div>
<div class="a" style="left:1154.3px;top:424px;width:289px;height:1px;background:#dcdcdc"></div>

<div class="a" style="left:0;top:840px;width:1500px;height:30px;background:#fff"></div>
<!-- frame -->
<div class="a frameL"></div>
<div class="a frameR"></div>
<div class="a frameB"></div>

</body>
</html>
